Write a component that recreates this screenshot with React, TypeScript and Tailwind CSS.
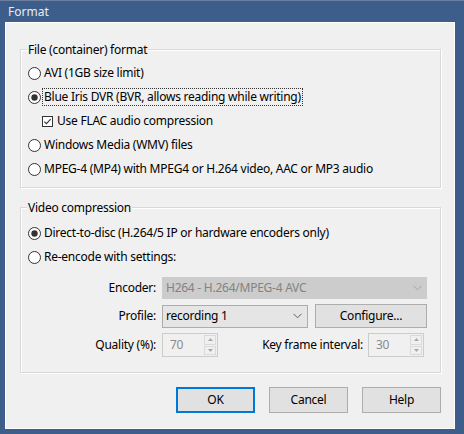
import React from "react";

const font = { fontFamily: '"Noto Sans", "Open Sans", sans-serif' };

function Radio({ checked }: { checked?: boolean }) {
  return (
    <svg width="13" height="13" viewBox="0 0 13 13" className="shrink-0">
      <circle cx="6.5" cy="6.5" r="6" fill="#fff" stroke="#333" strokeWidth="1" />
      {checked && <circle cx="6.5" cy="6.5" r="3.2" fill="#333" />}
    </svg>
  );
}

function Check() {
  return (
    <svg width="11" height="11" viewBox="0 0 11 11" className="shrink-0">
      <rect x="0.5" y="0.5" width="10" height="10" fill="#fff" stroke="#333" />
      <path d="M2.3 5.6 L4.4 7.7 L8.7 3.2" fill="none" stroke="#333" strokeWidth="1.1" />
    </svg>
  );
}

function Chevron({ color }: { color: string }) {
  return (
    <svg width="9" height="6" viewBox="0 0 9 6">
      <path d="M0.5 0.8 L4.5 4.8 L8.5 0.8" fill="none" stroke={color} strokeWidth="1" />
    </svg>
  );
}

function Spin({ value }: { value: string }) {
  return (
    <div className="flex h-[24px] w-[56px] border border-[#cccccc] bg-[#f0f0f0]">
      <div className="flex flex-1 items-center pl-[7px] text-[#8a8a8a]">{value}</div>
      <div className="flex w-[13px] flex-col gap-[1px] py-[1px] pr-[1px]">
        <div className="flex flex-1 items-center justify-center border border-[#dadada]">
          <svg width="5" height="3" viewBox="0 0 5 3">
            <path d="M0 3 L2.5 0 L5 3 Z" fill="#a8a8a8" />
          </svg>
        </div>
        <div className="flex flex-1 items-center justify-center border border-[#dadada]">
          <svg width="5" height="3" viewBox="0 0 5 3">
            <path d="M0 0 L2.5 3 L5 0 Z" fill="#a8a8a8" />
          </svg>
        </div>
      </div>
    </div>
  );
}

function Group({ label, className, children }: { label: string; className: string; children: React.ReactNode }) {
  return (
    <div
      className={
        "relative border border-[#d9d9d9] shadow-[inset_1px_1px_0_#ffffff,1px_1px_0_#ffffff] " + className
      }
    >
      <span className="absolute left-[6px] top-[-9px] bg-[#f0f0f0] px-[1px] leading-[18px]">{label}</span>
      {children}
    </div>
  );
}

function Btn({ children, focused }: { children: React.ReactNode; focused?: boolean }) {
  return (
    <div
      className={
        "flex h-[26px] w-[79px] items-center justify-center bg-[#e1e1e1] " +
        (focused ? "border-2 border-[#0078d7]" : "border border-[#adadad]")
      }
    >
      {children}
    </div>
  );
}

export default function App() {
  return (
    <div
      className="flex h-[434px] w-[464px] flex-col whitespace-nowrap bg-[#3d5d8b] text-[12px] tracking-[-0.25px] text-black"
      style={font}
    >
      <div className="flex h-[22px] shrink-0 items-center border-t border-[#6a7f9f] pl-[8px] text-[12px] tracking-normal text-[#e6ecf4]">
        Format
      </div>
      <div className="ml-[5px] flex h-[407px] w-[450px] flex-col border border-white bg-[#f0f0f0] pl-[14px]">
        <Group label="File (container) format" className="mt-[26px] h-[139px] w-[421px]">
          <div className="flex flex-col pl-[7px] pt-[11px]">
            <div className="flex h-[24px] items-center gap-[3px]">
              <Radio />
              <span>AVI (1GB size limit)</span>
            </div>
            <div className="flex h-[24px] items-center gap-[1px]">
              <Radio checked />
              <span className="border border-dotted border-[#333] px-[1px] leading-[16px]">
                Blue Iris DVR (BVR, allows reading while writing)
              </span>
            </div>
            <div className="flex h-[24px] items-center gap-[4px] pl-[14px]">
              <Check />
              <span>Use FLAC audio compression</span>
            </div>
            <div className="flex h-[24px] items-center gap-[3px]">
              <Radio />
              <span>Windows Media (WMV) files</span>
            </div>
            <div className="flex h-[24px] items-center gap-[3px]">
              <Radio />
              <span>MPEG-4 (MP4) with MPEG4 or H.264 video, AAC or MP3 audio</span>
            </div>
          </div>
        </Group>

        <Group label="Video compression" className="mt-[19px] h-[166px] w-[421px]">
          <div className="flex flex-col pl-[7px] pt-[13px]">
            <div className="flex h-[24px] items-center gap-[3px]">
              <Radio checked />
              <span>Direct-to-disc (H.264/5 IP or hardware encoders only)</span>
            </div>
            <div className="flex h-[24px] items-center gap-[3px]">
              <Radio />
              <span>Re-encode with settings:</span>
            </div>
          </div>
          <div className="mt-[8px] flex h-[22px] items-center">
            <span className="w-[135px] text-right">Encoder:</span>
            <div className="ml-[6px] flex h-[22px] w-[265px] items-center justify-between bg-[#cccccc] pl-[4px] pr-[5px] text-[#838383]">
              <span>H264 - H.264/MPEG-4 AVC</span>
              <Chevron color="#a5a5a5" />
            </div>
          </div>
          <div className="mt-[5px] flex h-[24px] items-center">
            <span className="w-[135px] text-right">Profile:</span>
            <div className="ml-[6px] flex h-[23px] w-[146px] items-center justify-between border border-[#acacac] bg-[#e5e5e5] pl-[3px] pr-[5px]">
              <span>recording 1</span>
              <Chevron color="#606060" />
            </div>
            <div className="ml-[7px] flex h-[24px] w-[112px] items-center justify-center border border-[#adadad] bg-[#e1e1e1]">
              Configure...
            </div>
          </div>
          <div className="mt-[5px] flex h-[24px] items-center">
            <span className="w-[135px] text-right">Quality (%):</span>
            <div className="ml-[6px]">
              <Spin value="70" />
            </div>
            <span className="ml-[29px] w-[116px] text-right">Key frame interval:</span>
            <div className="ml-[5px]">
              <Spin value="30" />
            </div>
          </div>
        </Group>

        <div className="mt-[14px] flex w-[421px] justify-end gap-[14px]">
          <Btn focused>OK</Btn>
          <Btn>Cancel</Btn>
          <Btn>Help</Btn>
        </div>
      </div>
    </div>
  );
}
